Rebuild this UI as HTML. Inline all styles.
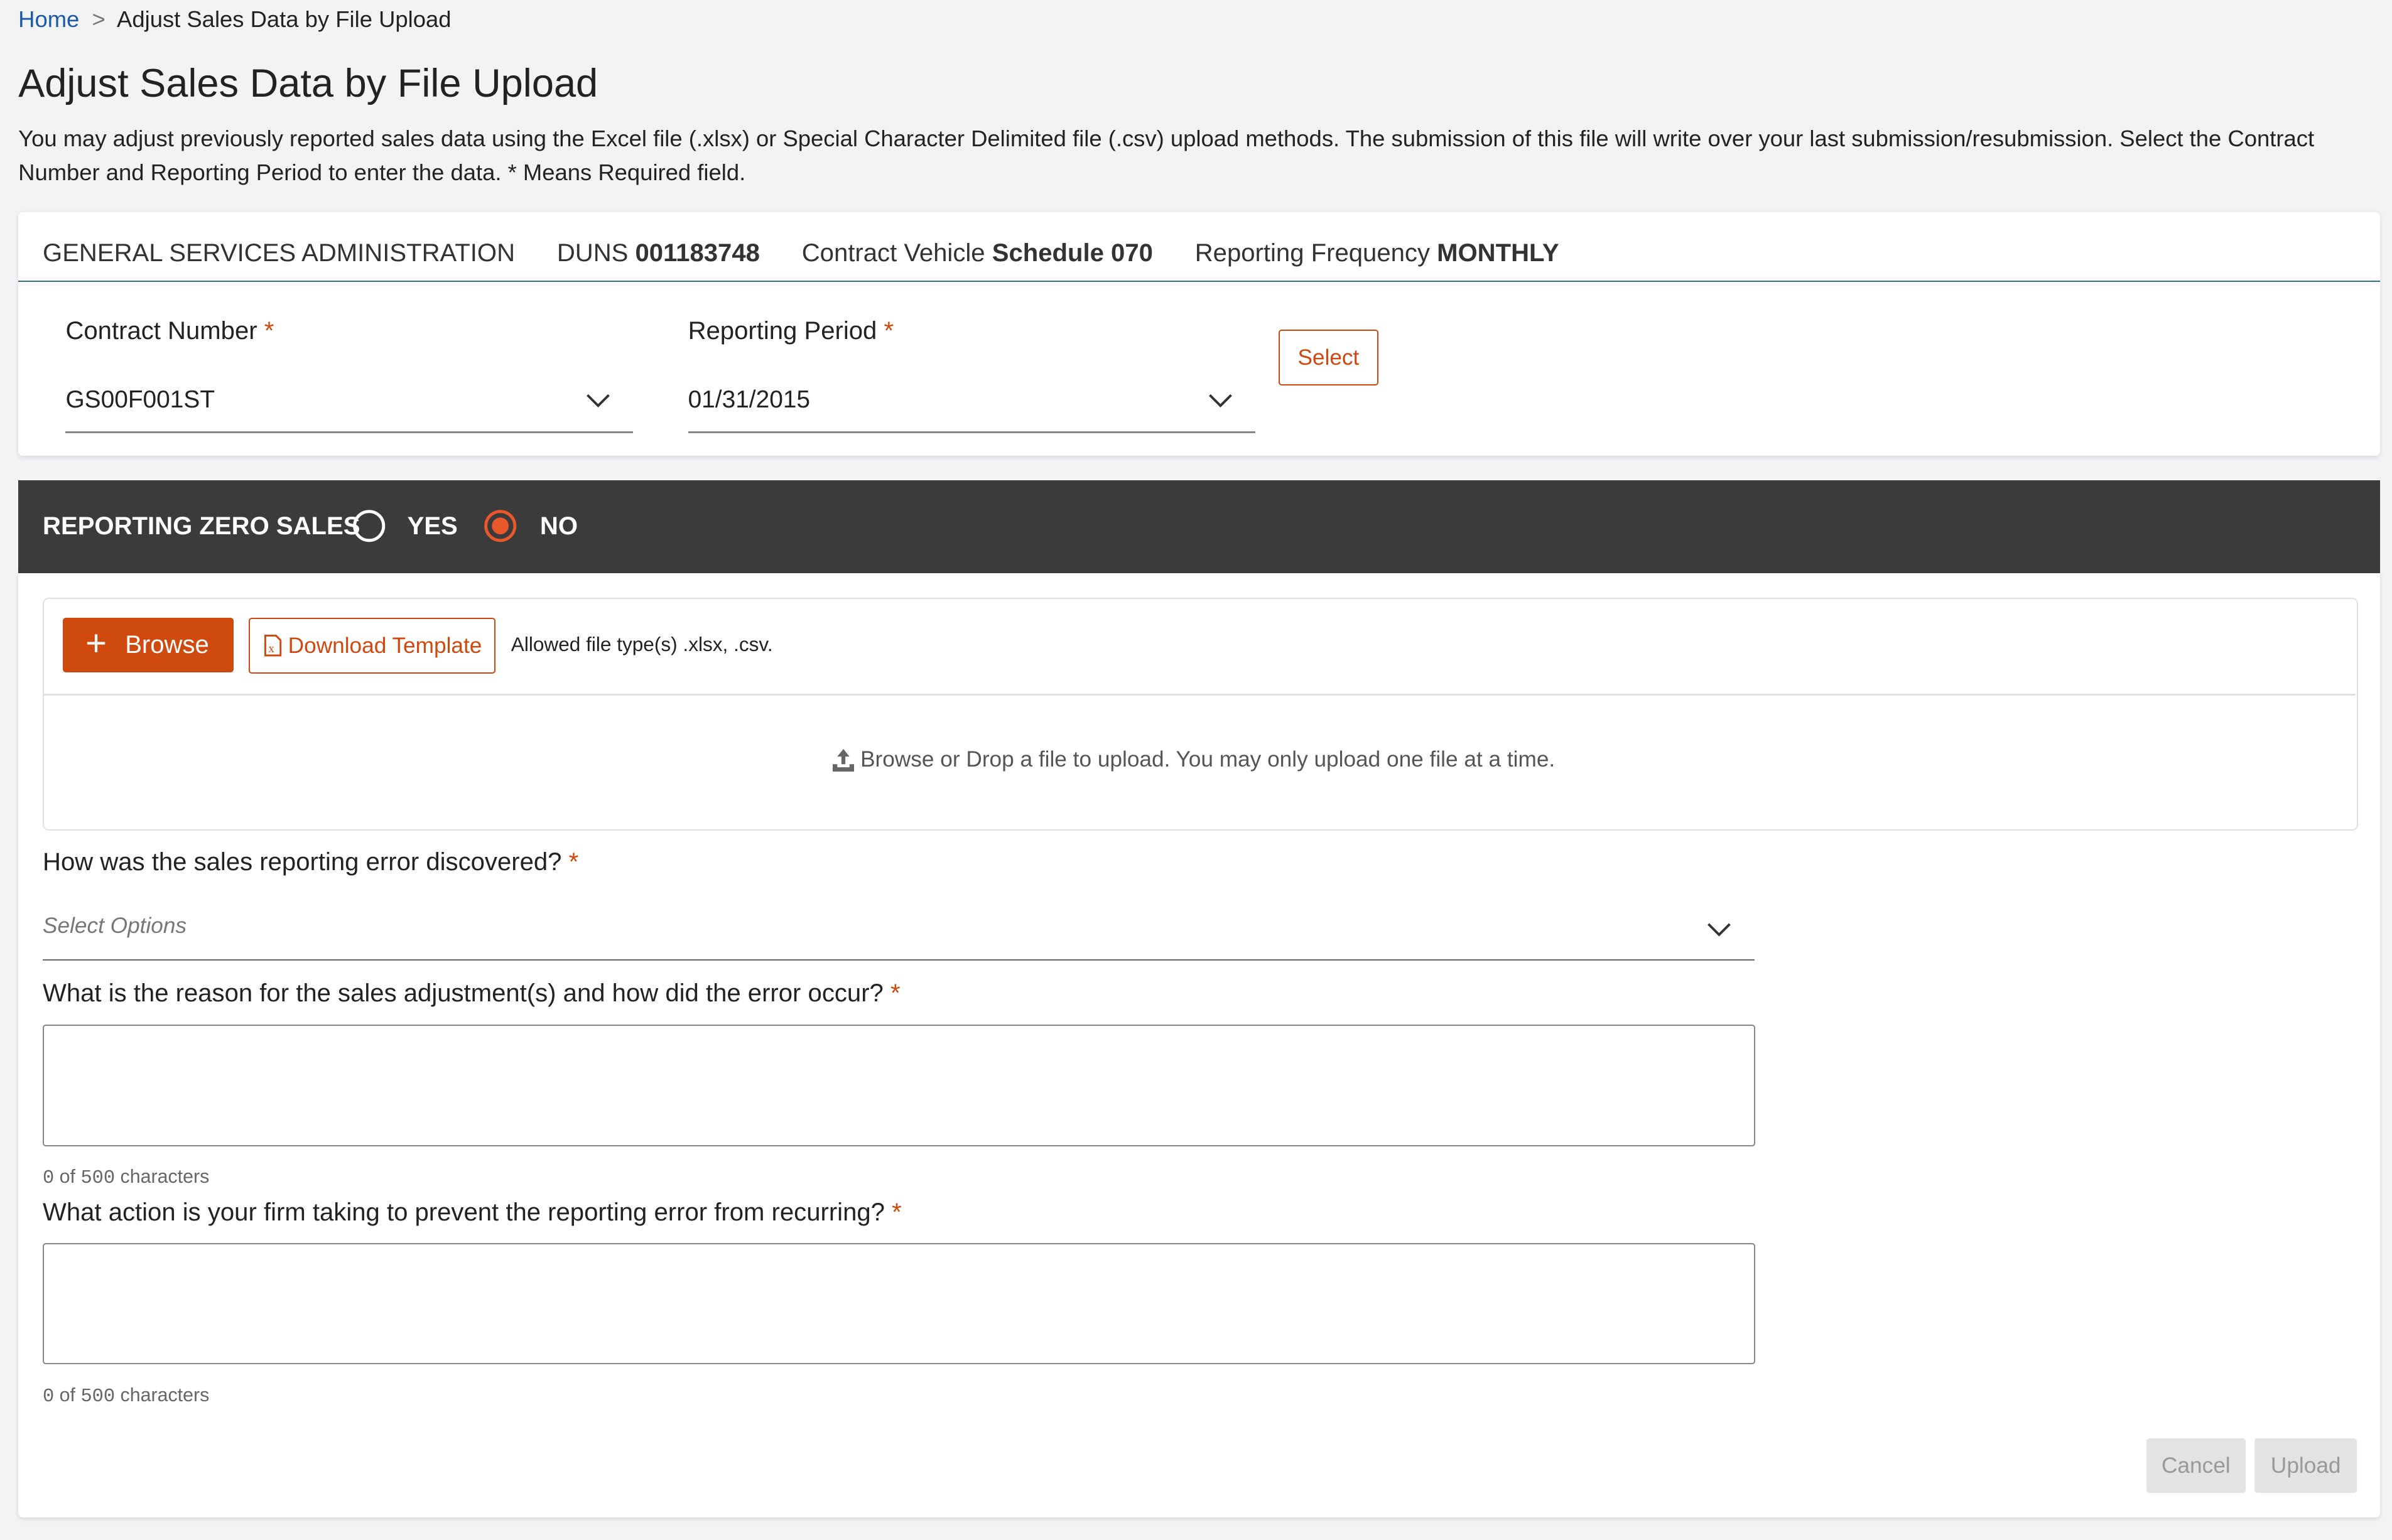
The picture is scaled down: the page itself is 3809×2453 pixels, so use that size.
<!DOCTYPE html>
<html><head><meta charset="utf-8">
<style>
html,body{margin:0;padding:0;background:#f2f3f5;}
body{width:3809px;height:2453px;overflow:hidden;}
#w{zoom:2.4292;width:1568px;height:1010px;position:relative;font-family:"Liberation Sans",sans-serif;color:#222;}
.a{position:absolute;white-space:nowrap;}
.req{color:#d0480f;}
.card{position:absolute;background:#fff;box-shadow:0 1px 3px rgba(0,0,0,.12);border-radius:3px;}
.line{position:absolute;height:1px;background:#888;}
.ta{position:absolute;border:1px solid #888;border-radius:2px;background:#fff;}
.btn{position:absolute;border-radius:2px;}
</style></head><body><div id="w">
<div class="a" style="left:12px;top:4px;font-size:15px;"><span style="color:#1a5aa6">Home</span> <span style="color:#777">&nbsp;&gt;&nbsp;</span> Adjust Sales Data by File Upload</div>
<div class="a" style="left:12px;top:40px;font-size:26px;color:#222">Adjust Sales Data by File Upload</div>
<div class="a" style="left:12px;top:80px;font-size:15px;line-height:22px;white-space:normal;width:1540px;">You may adjust previously reported sales data using the Excel file (.xlsx) or Special Character Delimited file (.csv) upload methods. The submission of this file will write over your last submission/resubmission. Select the Contract Number and Reporting Period to enter the data. * Means Required field.</div>

<div class="card" style="left:12px;top:139px;width:1548px;height:160px;"></div>
<div class="a" style="left:28px;top:157px;font-size:16.5px;color:#333">GENERAL SERVICES ADMINISTRATION &nbsp;&nbsp;&nbsp;&nbsp; DUNS <b>001183748</b> &nbsp;&nbsp;&nbsp;&nbsp; Contract Vehicle <b>Schedule 070</b> &nbsp;&nbsp;&nbsp;&nbsp; Reporting Frequency <b>MONTHLY</b></div>
<div class="a" style="left:12px;top:184px;width:1548px;height:1px;background:#2c6e8a"></div>
<div class="a" style="left:43px;top:208px;font-size:16.5px;">Contract Number <span class="req">*</span></div>
<div class="a" style="left:43px;top:253px;font-size:16px;">GS00F001ST</div>
<svg class="a" style="left:384px;top:256px" width="16" height="12"><path d="M1 3l7 7 7-7" fill="none" stroke="#333" stroke-width="1.6"/></svg>
<div class="line" style="left:43px;top:283px;width:372px"></div>
<div class="a" style="left:451px;top:208px;font-size:16.5px;">Reporting Period <span class="req">*</span></div>
<div class="a" style="left:451px;top:253px;font-size:16px;">01/31/2015</div>
<svg class="a" style="left:792px;top:256px" width="16" height="12"><path d="M1 3l7 7 7-7" fill="none" stroke="#333" stroke-width="1.6"/></svg>
<div class="line" style="left:451px;top:283px;width:372px"></div>
<div class="btn a" style="left:838px;top:216px;width:64px;height:35px;border:1px solid #d0480f;color:#d0480f;font-size:14.5px;text-align:center;line-height:35px;">Select</div>

<div class="a" style="left:12px;top:315px;width:1548px;height:61px;background:#3b3b3b"></div>
<div class="a" style="left:28px;top:336px;font-size:16.5px;color:#fff;font-weight:bold;">REPORTING ZERO SALES</div>
<svg class="a" style="left:231px;top:334px" width="22" height="22"><circle cx="11" cy="11" r="9.5" fill="none" stroke="#fff" stroke-width="2"/></svg>
<div class="a" style="left:267px;top:336px;font-size:16.5px;color:#fff;font-weight:bold;">YES</div>
<svg class="a" style="left:317px;top:334px" width="22" height="22"><circle cx="11" cy="11" r="9.5" fill="none" stroke="#e8582a" stroke-width="2"/><circle cx="11" cy="11" r="5.5" fill="#e8582a"/></svg>
<div class="a" style="left:354px;top:336px;font-size:16.5px;color:#fff;font-weight:bold;">NO</div>

<div class="card" style="left:12px;top:376px;width:1548px;height:619px;border-radius:0 0 3px 3px"></div>
<div class="a" style="left:28px;top:392px;width:1516px;height:151px;border:1px solid #e0e0e0;border-radius:4px;background:#fff"></div>
<div class="a" style="left:29px;top:455px;width:1515px;height:1px;background:#e0e0e0"></div>
<div class="btn a" style="left:41px;top:405px;width:112px;height:36px;background:#cf4a0f;color:#fff;font-size:16.5px;line-height:36px;"><span style="position:absolute;left:15px;top:-1px;font-size:24px;font-weight:300">+</span><span style="position:absolute;left:41px">Browse</span></div>
<div class="btn a" style="left:163px;top:405px;width:160px;height:35px;border:1px solid #d0480f;color:#d0480f;font-size:14.5px;line-height:35px;"><svg style="position:absolute;left:9px;top:10px" width="12" height="15"><path d="M1 1h7l3 3v10H1z" fill="none" stroke="#d0480f" stroke-width="1.2"/><text x="3" y="12" font-size="8" fill="#d0480f" font-family="Liberation Serif">x</text></svg><span style="position:absolute;left:25px">Download Template</span></div>
<div class="a" style="left:335px;top:415px;font-size:13px;color:#222">Allowed file type(s) .xlsx, .csv.</div>
<svg class="a" style="left:546px;top:491px" width="14" height="15"><path d="M7 0l4 5H8.3v5H5.7V5H3z M0 10h3v2h8v-2h3v5H0z" fill="#666"/></svg>
<div class="a" style="left:564px;top:490px;font-size:14.5px;color:#555">Browse or Drop a file to upload. You may only upload one file at a time.</div>

<div class="a" style="left:28px;top:556px;font-size:16.5px;">How was the sales reporting error discovered? <span class="req">*</span></div>
<div class="a" style="left:28px;top:599px;font-size:14.5px;color:#777;font-style:italic">Select Options</div>
<svg class="a" style="left:1119px;top:604px" width="16" height="12"><path d="M1 2l7 7 7-7" fill="none" stroke="#333" stroke-width="1.6"/></svg>
<div class="line" style="left:28px;top:629px;width:1122px;background:#666"></div>
<div class="a" style="left:28px;top:642px;font-size:16.5px;">What is the reason for the sales adjustment(s) and how did the error occur? <span class="req">*</span></div>
<div class="ta" style="left:28px;top:672px;width:1121px;height:78px"></div>
<div class="a" style="left:28px;top:765px;font-size:12.5px;color:#666"><span style="font-family:'Liberation Mono'">0</span> of <span style="font-family:'Liberation Mono'">500</span> characters</div>
<div class="a" style="left:28px;top:786px;font-size:16.5px;">What action is your firm taking to prevent the reporting error from recurring? <span class="req">*</span></div>
<div class="ta" style="left:28px;top:815px;width:1121px;height:78px"></div>
<div class="a" style="left:28px;top:908px;font-size:12.5px;color:#666"><span style="font-family:'Liberation Mono'">0</span> of <span style="font-family:'Liberation Mono'">500</span> characters</div>
<div class="btn a" style="left:1407px;top:943px;width:65px;height:36px;background:#e3e3e3;color:#999;font-size:14.5px;text-align:center;line-height:36px">Cancel</div>
<div class="btn a" style="left:1478px;top:943px;width:67px;height:36px;background:#e3e3e3;color:#999;font-size:14.5px;text-align:center;line-height:36px">Upload</div>
</div></body></html>
